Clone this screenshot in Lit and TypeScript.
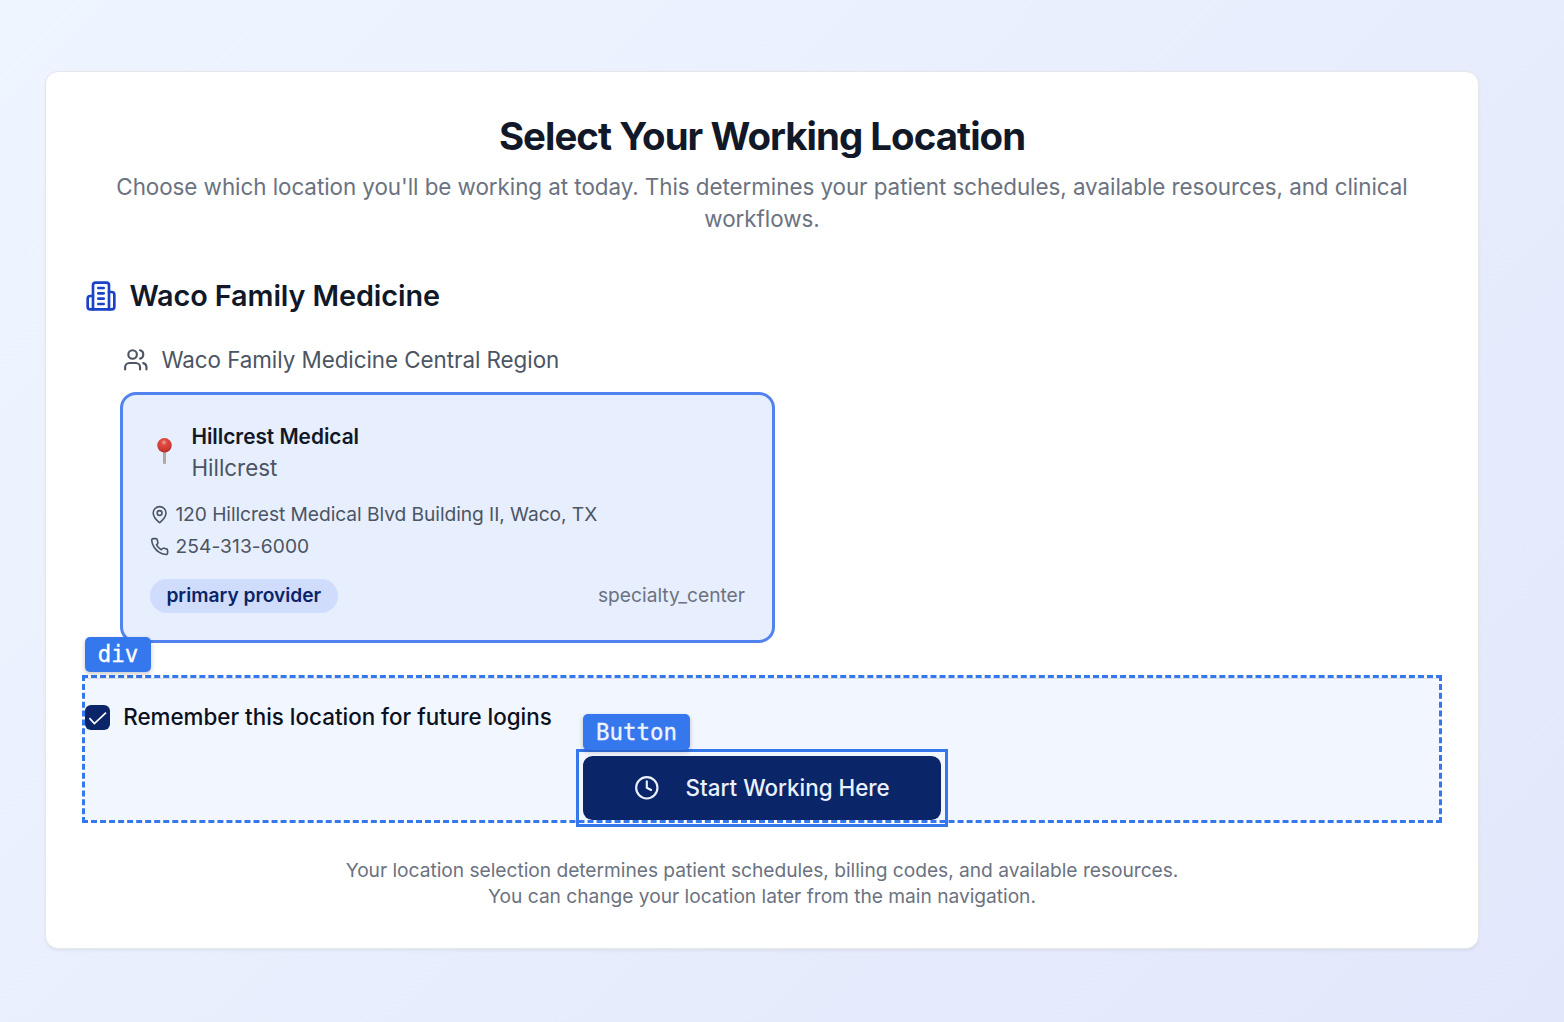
import { LitElement, html, css, svg } from "lit";
import { customElement, state } from "lit/decorators.js";

const icon = (cls: string, body: unknown) => html`<svg
  class="icon ${cls}"
  viewBox="0 0 24 24"
  fill="none"
  stroke="currentColor"
  stroke-width="2"
  stroke-linecap="round"
  stroke-linejoin="round"
>${body}</svg>`;

const building = svg`<path d="M6 22V4a2 2 0 0 1 2-2h8a2 2 0 0 1 2 2v18Z"/><path d="M6 12H4a2 2 0 0 0-2 2v6a2 2 0 0 0 2 2h2"/><path d="M18 9h2a2 2 0 0 1 2 2v9a2 2 0 0 1-2 2h-2"/><path d="M10 6h4"/><path d="M10 10h4"/><path d="M10 14h4"/><path d="M10 18h4"/>`;
const users = svg`<path d="M16 21v-2a4 4 0 0 0-4-4H6a4 4 0 0 0-4 4v2"/><circle cx="9" cy="7" r="4"/><path d="M22 21v-2a4 4 0 0 0-3-3.87"/><path d="M16 3.13a4 4 0 0 1 0 7.75"/>`;
const mapPin = svg`<path d="M20 10c0 4.993-5.539 10.193-7.399 11.799a1 1 0 0 1-1.202 0C9.539 20.193 4 14.993 4 10a8 8 0 0 1 16 0"/><circle cx="12" cy="10" r="3"/>`;
const phone = svg`<path d="M22 16.92v3a2 2 0 0 1-2.18 2 19.79 19.79 0 0 1-8.63-3.07 19.5 19.5 0 0 1-6-6 19.79 19.79 0 0 1-3.07-8.67A2 2 0 0 1 4.11 2h3a2 2 0 0 1 2 1.72 12.84 12.84 0 0 0 .7 2.81 2 2 0 0 1-.45 2.11L8.09 9.91a16 16 0 0 0 6 6l1.27-1.27a2 2 0 0 1 2.11-.45 12.84 12.84 0 0 0 2.81.7A2 2 0 0 1 22 16.92z"/>`;
const clock = svg`<circle cx="12" cy="12" r="10"/><polyline points="12 6 12 12 16 14"/>`;

@customElement("app-root")
export class AppRoot extends LitElement {
  @state() private remember = true;

  static styles = css`
    :host { display: block; }
    * { box-sizing: border-box; margin: 0; }
    .page {
      height: 1022px;
      padding: 71px 85px 73px 45px;
      background: linear-gradient(135deg, #eff5ff, #e2e7fb);
      font-family: Inter, sans-serif;
      font-size: 22.4px;
      line-height: 32px;
      color: #111827;
    }
    .panel {
      height: 878px;
      padding: 45px 39px 0;
      background: #fff;
      border: 1px solid #e5e7eb;
      border-radius: 13px;
      box-shadow: 0 1.6px 3.2px rgba(0, 0, 0, 0.05);
    }
    .icon { display: block; flex: none; }
    .title {
      font-size: 38.4px;
      line-height: 38px;
      font-weight: 700;
      letter-spacing: -0.96px;
      text-align: center;
    }
    .subtitle {
      margin-top: 16px;
      color: #6b7280;
      text-align: center;
      letter-spacing: -0.048px;
    }
    .org {
      display: flex;
      align-items: center;
      gap: 12.4px;
      height: 46px;
      margin-top: 38px;
    }
    .org-name { font-size: 28.8px; font-weight: 600; letter-spacing: -0.09px; }
    .i-org { width: 32px; height: 32px; color: #1b43c8; }
    .region {
      display: flex;
      align-items: center;
      gap: 12.8px;
      margin: 25px 0 0 38px;
      color: #4b5563;
      letter-spacing: -0.05px;
    }
    .i-region { width: 25.6px; height: 25.6px; }
    .location {
      width: 655px;
      height: 251px;
      margin: 16px 0 0 35px;
      padding: 27px 27px 0;
      border: 3px solid #5182ef;
      border-radius: 16px;
      background: #e7eefe;
    }
    .head { display: flex; align-items: center; }
    .pin { display: block; width: 29px; height: 29px; margin: 0 12.4px 3px 0; flex: none; }
    .name { font-size: 20.8px; line-height: 30px; font-weight: 600; }
    .area { line-height: 31px; color: #4b5563; }
    .details { margin-top: 15px; font-size: 19.2px; color: #4b5563; letter-spacing: -0.06px; }
    .detail { display: flex; align-items: center; gap: 6.2px; height: 32px; }
    .phone { letter-spacing: 0.08px; }
    .i-small { width: 19.2px; height: 19.2px; margin-top: 1px; }
    .meta {
      display: flex;
      align-items: center;
      justify-content: space-between;
      margin-top: 17px;
      font-size: 19.2px;
    }
    .badge {
      height: 34px;
      padding: 0 16.4px;
      line-height: 33px;
      border-radius: 17px;
      background: #cfdcfc;
      color: #0b2468;
      font-weight: 600;
    }
    .kind { height: 34px; color: #6b7280; }
    .confirm {
      position: relative;
      height: 148px;
      margin: 32px -3px 0;
      padding: 26px 0 0;
      border: 3px dashed #3577ec;
      background: #f2f6ff padding-box;
      box-shadow: inset 0 1px 0 #d6deeb;
    }
    .remember { display: flex; align-items: center; gap: 13.2px; height: 26px; font-weight: 500; color: #0b1120; }
    .box {
      display: grid;
      place-items: center;
      width: 25px;
      height: 25px;
      padding: 0;
      border: 0;
      border-radius: 6px;
      background: #0b2569;
    }
    .box svg { display: block; width: 25px; height: 25px; }
    .start {
      position: relative;
      display: flex;
      align-items: center;
      gap: 26px;
      width: 358px;
      height: 64px;
      margin: 26px auto 0;
      padding: 0 0 0 51px;
      border: 0;
      border-radius: 9.6px;
      background: #0b2569;
      color: #eaf1fd;
      font: 500 22.4px/32px Inter, sans-serif;
    }
    .i-clock { width: 25.6px; height: 25.6px; }
    .outline {
      position: absolute;
      inset: -7px;
      border: 3px solid #3577ec;
      pointer-events: none;
    }
    .tag {
      position: absolute;
      left: 0;
      padding: 0 12.8px;
      border-radius: 5px;
      background: #3577ec;
      color: #fff;
      font: 400 22.4px/35px "DejaVu Sans Mono", monospace;
      -webkit-text-stroke: 0.35px currentColor;
      box-shadow: 0 2px 5px rgba(0, 0, 0, 0.22);
    }
    .tag-div { top: -41px; }
    .tag-button { top: -42px; padding: 0 13.1px; line-height: 36px; color: #eef4ff; }
    .note {
      margin-top: 34px;
      font-size: 19.2px;
      line-height: 26px;
      color: #6b7280;
      text-align: center;
      letter-spacing: -0.03px;
    }
  `;

  private toggle() {
    this.remember = !this.remember;
  }

  private pushpin() {
    return html`<svg class="pin" viewBox="0 0 29 29">
      <defs>
        <radialGradient id="head" cx="0.46" cy="0.3" r="0.7">
          <stop offset="0" stop-color="#f4a79c" />
          <stop offset="0.28" stop-color="#dd4b40" />
          <stop offset="0.75" stop-color="#cf3932" />
          <stop offset="1" stop-color="#a92b29" />
        </radialGradient>
        <linearGradient id="needle">
          <stop offset="0" stop-color="#786d69" />
          <stop offset="0.5" stop-color="#b9aea8" />
          <stop offset="1" stop-color="#8c7f79" />
        </linearGradient>
      </defs>
      <rect x="13.4" y="14" width="2.3" height="13" rx="0.8" fill="url(#needle)" />
      <circle cx="14.5" cy="8.3" r="7.2" fill="url(#head)" />
    </svg>`;
  }

  render() {
    return html`<main class="page">
      <section class="panel">
        <h1 class="title">Select Your Working Location</h1>
        <p class="subtitle">Choose which location you'll be working at today. This determines your patient schedules, available resources, and clinical workflows.</p>

        <div class="org">${icon("i-org", building)}<h2 class="org-name">Waco Family Medicine</h2></div>
        <div class="region">${icon("i-region", users)}<span>Waco Family Medicine Central Region</span></div>

        <article class="location">
          <div class="head">
            ${this.pushpin()}
            <div>
              <h3 class="name">Hillcrest Medical</h3>
              <p class="area">Hillcrest</p>
            </div>
          </div>
          <div class="details">
            <div class="detail">${icon("i-small", mapPin)}<span>120 Hillcrest Medical Blvd Building II, Waco, TX</span></div>
            <div class="detail phone">${icon("i-small", phone)}<span>254-313-6000</span></div>
          </div>
          <div class="meta"><span class="badge">primary provider</span><span class="kind">specialty_center</span></div>
        </article>

        <div class="confirm">
          <span class="tag tag-div">div</span>
          <div class="remember">
            <button class="box" role="checkbox" aria-checked=${this.remember} @click=${this.toggle}>
              ${this.remember
                ? html`<svg viewBox="0 0 25 25" fill="none" stroke="#fff" stroke-width="1.7"><path d="M4.4 13.2 9.4 18.6 21 7.6" /></svg>`
                : ""}
            </button>
            <span>Remember this location for future logins</span>
          </div>
          <button class="start">
            ${icon("i-clock", clock)}<span>Start Working Here</span>
            <span class="outline"></span>
            <span class="tag tag-button">Button</span>
          </button>
        </div>

        <p class="note">Your location selection determines patient schedules, billing codes, and available resources.<br />You can change your location later from the main navigation.</p>
      </section>
    </main>`;
  }
}
